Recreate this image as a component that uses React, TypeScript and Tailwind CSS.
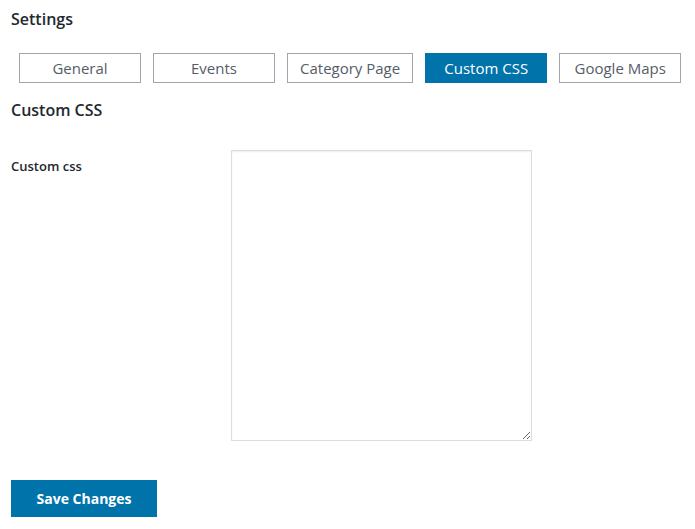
export default function App() {
  const tabs = ["General", "Events", "Category Page", "Custom CSS", "Google Maps"];
  const active = "Custom CSS";

  return (
    <div className="w-[695px] h-[529px] bg-white text-[#23282d] font-['Open_Sans','Noto_Sans',sans-serif] pl-[11px] pt-[8px]">
      {/* Page title */}
      <h1 className="text-[16px] leading-[22px] font-semibold">Settings</h1>

      {/* Tabs */}
      <div className="flex gap-[12px] ml-[8px] mt-[23px]">
        {tabs.map((tab) => (
          <button
            key={tab}
            className={
              tab === active
                ? "h-[30px] min-w-[122px] px-3 bg-[#0073aa] border border-[#0073aa] text-white text-[15px]"
                : "h-[30px] min-w-[122px] px-3 bg-white border border-[#a0a5aa] text-[#555d66] text-[15px]"
            }
          >
            {tab}
          </button>
        ))}
      </div>

      {/* Section */}
      <h2 className="mt-[16px] text-[16px] leading-[22px] font-semibold">Custom CSS</h2>

      <div className="flex mt-[29px]">
        <label className="w-[220px] pt-[7px] text-[13px] font-semibold leading-[18px]">Custom css</label>
        <textarea className="w-[301px] h-[291px] border border-[#ddd] shadow-[inset_0_1px_2px_rgba(0,0,0,0.07)] outline-none resize" />
      </div>

      <button className="mt-[39px] w-[146px] h-[37px] bg-[#0073aa] text-white text-[14px] font-bold">
        Save Changes
      </button>
    </div>
  );
}
